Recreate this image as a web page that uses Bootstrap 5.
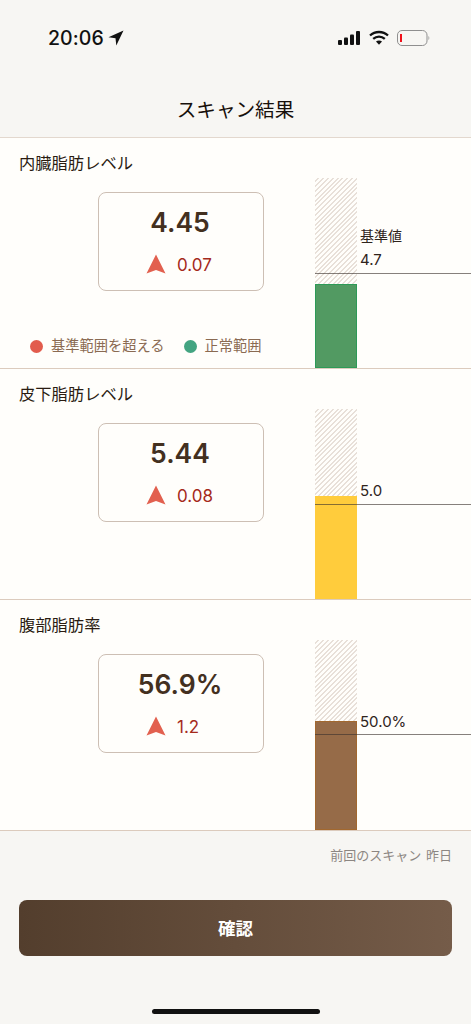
<!doctype html>
<html lang="ja">
<head>
<meta charset="utf-8">
<meta name="viewport" content="width=device-width, initial-scale=1">
<link rel="stylesheet" href="https://cdn.jsdelivr.net/npm/bootstrap@5.3.0/dist/css/bootstrap.min.css">
<style>
html,body{height:100%}
body{background:#f7f6f3;font-family:Inter,"Noto Sans CJK JP",sans-serif;color:#3f2d20;width:471px;overflow:hidden}
.phone{height:1024px}
.status-row{height:76px;padding:26px 41px 0 48px;color:#111}
.clock{font-size:19.5px;font-weight:500;line-height:24px;letter-spacing:.1px}
.page-title{font-size:19.6px;font-weight:400;line-height:26px;padding-top:21px;color:#17100b;border-bottom:1px solid #e3d8ce;box-sizing:content-box;height:40px}
.scan-sec{height:231px;background:#fffefb;border-bottom:1px solid #dccbbd}
.sec-left{width:315px;padding:14px 0 0 19px}
.sec-name{font-size:16.3px;font-weight:400;line-height:22px;height:40px;color:#2a1c12}
.value-box{width:166px;height:99px;margin-left:79px;border:1px solid #cdbfb4;border-radius:8px;background:#fffefb;padding-top:11px}
.value-num{font-size:26.5px;font-weight:600;line-height:36px;color:#43301f;padding-right:2px}
.value-delta{margin-top:13px;padding-left:47px;font-size:17px;line-height:24px;color:#a52a1c;gap:11px}
.delta-arrow{margin-top:-2px}
.legend-row{margin-top:45px;margin-left:11px;font-size:14.25px;line-height:20px;color:#8a6a52;gap:19px;white-space:nowrap}
.legend-dot{width:13px;height:13px;border-radius:50%;margin-right:8px}
.dot-red{background:#e25c4d}
.dot-green{background:#43a481}
.chart-area{flex:1;position:relative;padding-top:40px}
.bar-track{width:42px;height:190px;position:relative;background:repeating-linear-gradient(135deg,#fffefb 0 2px,#e8e0d9 2px 3.4px)}
.bar-fill{position:absolute;left:0;right:0;bottom:0;border:1px solid}
.fill-green{background:#529a62;border-color:#2d9a57;height:84px}
.fill-yellow{background:#ffcc3c;border-color:#ffcc3c;height:103px}
.fill-brown{background:#966b48;border-color:#a2682f;height:109px}
.ref-line{position:absolute;left:0;width:156px;height:1.4px;background:rgba(60,50,45,.62)}
.ref-label{position:absolute;left:45px;font-size:14px;line-height:18px;color:#2f241c;white-space:nowrap}
.ref-num{font-size:15px}
.last-scan{font-size:13px;line-height:18px;color:#8c8682;padding:15px 19px 0 0;height:69px;word-spacing:1px}
.confirm-btn{display:block;width:433px;height:56px;margin-left:19px;padding-top:9px;border:0;border-radius:8px;background:linear-gradient(90deg,#533e2d,#755c49);color:#fff;font-size:17.5px;font-weight:700}
.home-bar{width:168px;height:5px;border-radius:3px;background:#111;margin:53px auto 0}
</style>
</head>
<body>
<div class="phone d-flex flex-column">
  <div class="status-row d-flex justify-content-between">
    <div class="d-flex align-items-start">
      <span class="clock">20:06</span>
      <svg width="16" height="16" viewBox="0 0 16 16" class="mt-1 ms-1"><path d="M15.500 .5 .5 7.300l7 .9.8 7.300z" fill="#111"/></svg>
    </div>
    <div class="d-flex align-items-start">
      <svg width="23" height="16" viewBox="0 0 23 16" class="mt-1"><g fill="#111"><rect x="0" y="10" width="4" height="5" rx="1"/><rect x="6" y="7.500" width="4" height="7.500" rx="1"/><rect x="12" y="4.500" width="4" height="10.500" rx="1"/><rect x="18" y="1" width="4" height="14" rx="1"/></g></svg>
      <svg width="20" height="16" viewBox="0 0 20 16" class="mt-1 ms-2"><g fill="none" stroke="#111" stroke-width="2.300"><path d="M1 5.500C6 .8 14 .8 19 5.500"/><path d="M4.200 8.800c3.300-3 8.300-3 11.600 0"/></g><path d="M7 11.500c1.800-1.400 4.200-1.400 6 0l-3 3.300z" fill="#111"/></svg>
      <svg width="33" height="16" viewBox="0 0 33 16" class="mt-1 ms-2"><rect x=".5" y=".5" width="29.500" height="15" rx="4.500" fill="none" stroke="#8f8f8f"/><rect x="3" y="4" width="2" height="8" fill="#f0101a"/><path d="M31.500 6c1 .4 1 3.600 0 4z" fill="#8f8f8f"/></svg>
    </div>
  </div>
  <div class="page-title text-center">スキャン結果</div>

  <section class="scan-sec d-flex">
    <div class="sec-left">
      <div class="sec-name">内臓脂肪レベル</div>
      <div class="value-box text-center">
        <div class="value-num">4.45</div>
        <div class="value-delta d-flex align-items-center">
          <svg class="delta-arrow" width="20" height="20" viewBox="0 0 20 20"><path d="M10 .5 19.500 19.500 10 16 .5 19.500z" fill="#e2604f"/></svg><span>0.07</span>
        </div>
      </div>
      <div class="legend-row d-flex align-items-center">
        <span class="d-flex align-items-center"><span class="legend-dot dot-red"></span>基準範囲を超える</span>
        <span class="d-flex align-items-center"><span class="legend-dot dot-green"></span>正常範囲</span>
      </div>
    </div>
    <div class="chart-area">
      <div class="bar-track"><div class="bar-fill fill-green"></div></div>
      <div class="ref-line" style="top:135px"></div>
      <div class="ref-label" style="top:89px">基準値</div>
      <div class="ref-label ref-num" style="top:113px">4.7</div>
    </div>
  </section>

  <section class="scan-sec d-flex">
    <div class="sec-left">
      <div class="sec-name">皮下脂肪レベル</div>
      <div class="value-box text-center">
        <div class="value-num">5.44</div>
        <div class="value-delta d-flex align-items-center">
          <svg class="delta-arrow" width="20" height="20" viewBox="0 0 20 20"><path d="M10 .5 19.500 19.500 10 16 .5 19.500z" fill="#e2604f"/></svg><span>0.08</span>
        </div>
      </div>
    </div>
    <div class="chart-area">
      <div class="bar-track"><div class="bar-fill fill-yellow"></div></div>
      <div class="ref-line" style="top:135px"></div>
      <div class="ref-label ref-num" style="top:113px">5.0</div>
    </div>
  </section>

  <section class="scan-sec d-flex">
    <div class="sec-left">
      <div class="sec-name">腹部脂肪率</div>
      <div class="value-box text-center">
        <div class="value-num">56.9%</div>
        <div class="value-delta d-flex align-items-center">
          <svg class="delta-arrow" width="20" height="20" viewBox="0 0 20 20"><path d="M10 .5 19.500 19.500 10 16 .5 19.500z" fill="#e2604f"/></svg><span>1.2</span>
        </div>
      </div>
    </div>
    <div class="chart-area">
      <div class="bar-track"><div class="bar-fill fill-brown"></div></div>
      <div class="ref-line" style="top:134px"></div>
      <div class="ref-label ref-num" style="top:113px">50.0%</div>
    </div>
  </section>

  <div class="last-scan text-end">前回のスキャン 昨日</div>
  <button type="button" class="btn confirm-btn">確認</button>
  <div class="home-bar"></div>
</div>
<script src="https://cdn.jsdelivr.net/npm/bootstrap@5.3.0/dist/js/bootstrap.bundle.min.js"></script>
</body>
</html>
